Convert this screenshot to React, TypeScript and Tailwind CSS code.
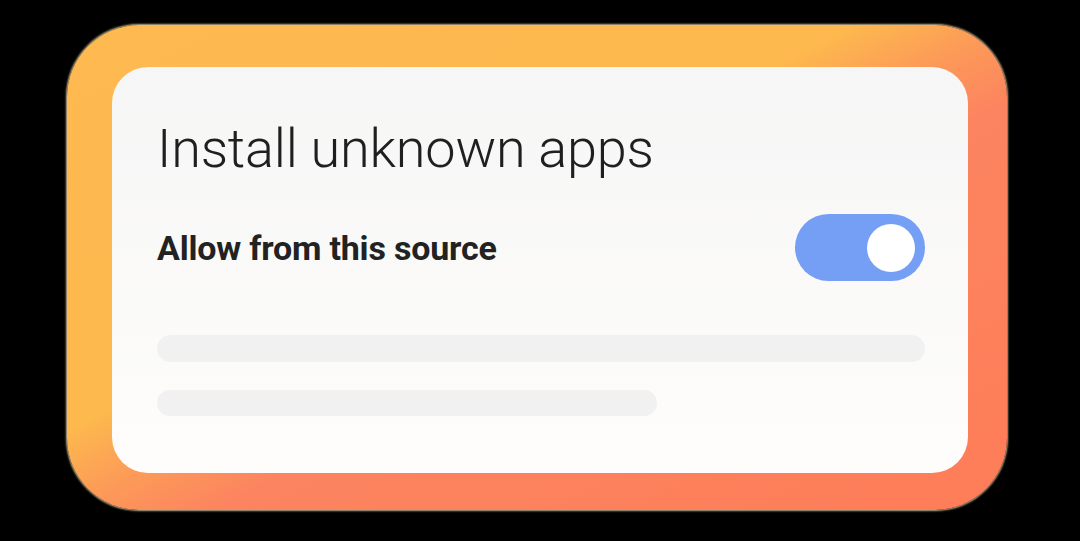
import React from 'react';

export default function App() {
  return (
    <div className="w-[1080px] h-[541px] bg-black overflow-hidden font-['Roboto',sans-serif]">
      {/* frame: yellow top/left, coral right/bottom, split along the diagonal */}
      <div className="ml-[67px] mt-[25px] w-[940px] h-[485px] rounded-[72px] bg-[linear-gradient(to_bottom_right,#fdba50_0%,#fdb84e_42%,#fc9a58_50%,#fc8460_58%,#fe7d58_100%)] shadow-[0_0_2px_1px_rgba(255,236,190,0.75)] pl-[45px] pt-[42px]">
        <div className="w-[856px] h-[406px] rounded-[36px] bg-gradient-to-b from-[#f6f6f6] to-[#fefdfb] pl-[45px] pr-[43px] pt-[55px]">
          <h1 className="text-[54px] leading-none font-light text-[#1f1f1f] tracking-[-0.2px]">
            Install unknown apps
          </h1>

          <div className="mt-[38px] flex items-center justify-between h-[67px]">
            <span className="text-[34px] leading-none font-bold text-[#222222] tracking-[-0.2px]">Allow from this source</span>
            <div className="w-[130px] h-[67px] rounded-full bg-[#759ef5] flex items-center justify-end pr-[10px]">
              <div className="w-[48px] h-[48px] rounded-full bg-white" />
            </div>
          </div>

          {/* placeholder lines */}
          <div className="mt-[54px] h-[27px] w-[768px] rounded-full bg-[#f1f1f1]" />
          <div className="mt-[28px] h-[26px] w-[500px] rounded-full bg-[#f1f1f1]" />
        </div>
      </div>
    </div>
  );
}
